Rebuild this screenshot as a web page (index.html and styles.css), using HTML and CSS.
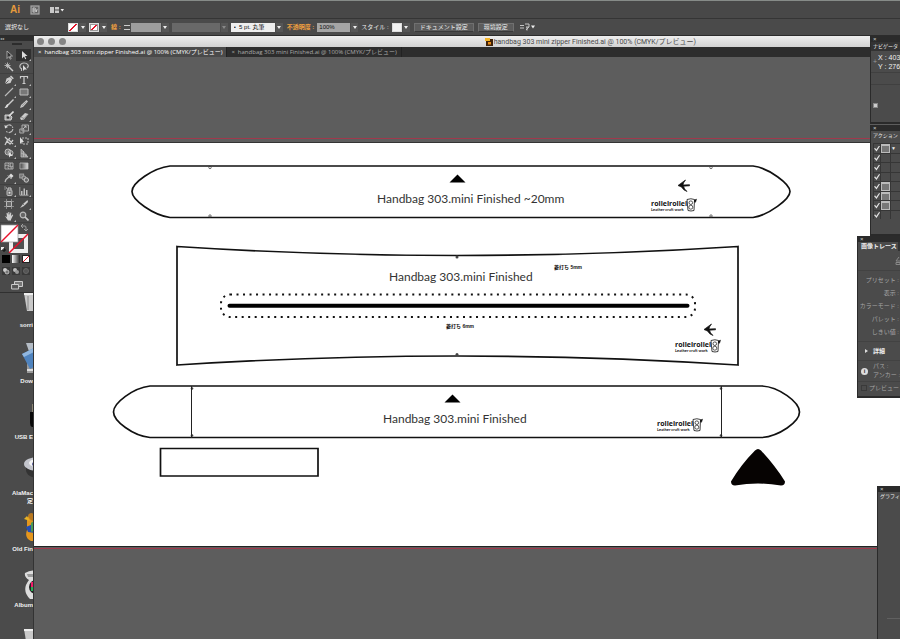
FILE: index.html
```html
<!DOCTYPE html>
<html lang="ja">
<head>
<meta charset="utf-8">
<title>handbag 303 mini zipper Finished.ai</title>
<link rel="stylesheet" href="styles.css">
</head>
<body>
<header class="menubar">
  <span class="brand">Ai</span>
  <button class="icon-btn" aria-label="Bridge"><svg width="10" height="10" viewBox="0 0 10 10"><rect x="1" y="1" width="8" height="8" fill="#666" stroke="#a8a8a8" stroke-width="1.2"/><path d="M3 3v4h1.500a1 1 0 0 0 0-2H3M3 3h1.500a1 1 0 0 1 0 2M6.500 7V4.800h1.200" fill="none" stroke="#ddd" stroke-width=".8"/></svg></button>
  <button class="icon-btn" aria-label="ドキュメントレイアウト"><svg width="14" height="10" viewBox="0 0 14 10"><path d="M0 2h4v6H0zM5 2h4v2.500H5zM5 5.500h4V8H5z" fill="#c9c9c9"/><path d="M10.500 4h3.500l-1.700 2.500z" fill="#eee"/></svg></button>
</header>

<section class="controls" aria-label="コントロール">
  <span class="selection">選択なし</span>
  <button class="swatch-btn" aria-label="塗り"><i class="swatch none"></i><i class="arrow"></i></button>
  <button class="swatch-btn" aria-label="線の色"><i class="swatch none ring"></i><i class="arrow"></i></button>
  <label class="hot" for="weight">線 :</label>
  <span class="field weight"><i class="spin"></i><select id="weight"><option></option></select><i class="arrow"></i></span>
  <span class="field profile"><select aria-label="可変線幅プロファイル" disabled><option></option></select><i class="arrow"></i></span>
  <span class="field brush"><select aria-label="ブラシ定義"><option>•&nbsp; 5 pt. 丸筆</option></select><i class="arrow"></i></span>
  <label class="hot" for="opacity">不透明度 :</label>
  <span class="field opacity"><input id="opacity" value="100%"><i class="arrow"></i></span>
  <span class="style-label">スタイル :</span>
  <button class="swatch-btn" aria-label="グラフィックスタイル"><i class="swatch"></i><i class="arrow"></i></button>
  <button class="push">ドキュメント設定</button>
  <button class="push">環境設定</button>
  <button class="icon-btn" aria-label="選択オプション"><svg width="16" height="8" viewBox="0 0 16 8"><path d="M0 2.500h4M0 5h4M5 1h4v3H6M7 4v3.500M9 4L6 7" fill="none" stroke="#c5c5c5"/><path d="M11 2.500h4L13 5.500z" fill="#eee"/></svg></button>
</section>

<main class="workspace">
  <aside class="side">
    <nav class="tools" aria-label="ツール">
      <div class="tools-head">◂◂</div>
      <div class="grip"></div>
      <div class="group">
        <button aria-label="選択"><svg viewBox="0 0 10 10"><path d="M3 1v7.500l2-2 1.200 2.700 1-.5L6 6h2.500z" fill="#333" stroke="#bbb" stroke-width=".8"/></svg></button>
        <button class="on more" aria-label="ダイレクト選択"><svg viewBox="0 0 10 10"><path d="M3 1v7.500l2-2 1.200 2.700 1-.5L6 6h2.500z" fill="#ddd"/></svg></button>
        <button aria-label="自動選択"><svg viewBox="0 0 10 10"><path d="M4.500 4.500L9 9" stroke="#ccc" stroke-width="1.500"/><path d="M3.500.5v6M.5 3.500h6M1.500 1.500l4 4M5.500 1.500l-4 4" stroke="#ccc" stroke-width=".8"/></svg></button>
        <button aria-label="なげなわ"><svg viewBox="0 0 10 10"><path d="M2.500 7C-.5 5 1 1 5 1s5.500 3 3 5" fill="none" stroke="#bbb" stroke-width="1.200"/><path d="M4 3v6l1.500-1.500H8z" fill="#ddd"/><path d="M2.500 6v3" stroke="#bbb"/></svg></button>
      </div>
      <div class="group">
        <button class="more" aria-label="ペン"><svg viewBox="0 0 10 10"><path d="M1 9l1.500-5.500L6 2l2.200 2.300L6.500 8z" fill="#ccc"/><path d="M1 9l3.500-3.500" stroke="#444" stroke-width=".8"/><path d="M6.500 1l2.800 2.800" stroke="#ccc" stroke-width="1.500"/></svg></button>
        <button class="more" aria-label="文字"><svg viewBox="0 0 10 10"><path d="M1.500 3.500V1.500h7v2M5 1.500v7M3.500 8.500h3" fill="none" stroke="#ccc" stroke-width="1.200"/></svg></button>
        <button class="more" aria-label="直線"><svg viewBox="0 0 10 10"><path d="M1 9l8-8" stroke="#bbb" stroke-width="1.100"/></svg></button>
        <button class="more" aria-label="長方形"><svg viewBox="0 0 10 10"><path d="M1 2h8v6H1z" fill="#777" stroke="#bbb"/></svg></button>
        <button aria-label="ブラシ"><svg viewBox="0 0 10 10"><path d="M9.500.5L4 6" stroke="#ccc" stroke-width="1.400"/><path d="M4.500 5.500C4 9 2 9 .5 9 2 8 1.500 6 3.500 5z" fill="#ddd"/></svg></button>
        <button class="more" aria-label="鉛筆"><svg viewBox="0 0 10 10"><path d="M1 9l1-3 5.500-5L9 2.500 4 8z" fill="#c5c5c5"/><path d="M3 7l4-4" stroke="#777" stroke-width=".5"/></svg></button>
        <button aria-label="塗りブラシ"><svg viewBox="0 0 10 10"><path d="M1 4h5l2 2-1 3H1z" fill="#999" stroke="#ddd" stroke-width=".9"/><path d="M9.500.5L4 6" stroke="#ddd" stroke-width="1.600"/><circle cx="4" cy="6.500" r="1.200" fill="#333"/></svg></button>
        <button class="more" aria-label="消しゴム"><svg viewBox="0 0 10 10"><path d="M1 7l5-5 3.500 1L5 8.500 2 9z" fill="#ccc"/><path d="M2 6l3 1.500 4-4" fill="none" stroke="#666" stroke-width=".6"/></svg></button>
      </div>
      <div class="group">
        <button class="more" aria-label="回転"><svg viewBox="0 0 10 10"><path d="M2 2.500A3.800 3.800 0 1 1 2 7" fill="none" stroke="#bbb" stroke-width="1.200" stroke-dasharray="6 1 1.500 1"/><path d="M.5 1l.5 3.500L4 3z" fill="#ddd"/></svg></button>
        <button class="more" aria-label="拡大・縮小"><svg viewBox="0 0 10 10"><path d="M3 1h6.500v6H3zM.8 5h4v4h-4z" fill="#555" stroke="#aaa"/><path d="M4 5l3-3M5 2h2v2" fill="none" stroke="#ccc" stroke-width=".8"/></svg></button>
        <button class="more" aria-label="線幅"><svg viewBox="0 0 10 10"><path d="M1 1l3 3 2-2M1 9l2-4 3 3 3-4M5 4l4 4" fill="none" stroke="#ccc" stroke-width="1.300"/></svg></button>
        <button aria-label="自由変形"><svg viewBox="0 0 10 10"><path d="M3 2h6v6H3z" fill="none" stroke="#bbb" stroke-dasharray="2 1"/><path d="M1 1v7l2-2h2z" fill="#ddd"/></svg></button>
        <button class="more" aria-label="シェイプ形成"><svg viewBox="0 0 10 10"><circle cx="4" cy="4" r="3" fill="#777" stroke="#bbb"/><circle cx="6.500" cy="5" r="2.500" fill="none" stroke="#bbb"/><path d="M5 4v5.500L6.500 8H9z" fill="#ddd"/></svg></button>
        <button class="more" aria-label="遠近グリッド"><svg viewBox="0 0 10 10"><path d="M2 1v8h7L2 1M4.500 3v6M7 6v3M2 5l6 3" fill="#888" stroke="#bbb" stroke-width=".8"/></svg></button>
      </div>
      <div class="group">
        <button aria-label="メッシュ"><svg viewBox="0 0 10 10"><path d="M1 2h8v6H1z" fill="#555" stroke="#aaa"/><path d="M1 5c3-3 5 3 8 0M4 2c3 2-2 4 1 6M7 2c-2 2 1 4 0 6" fill="none" stroke="#bbb" stroke-width=".8"/></svg></button>
        <button aria-label="グラデーション"><svg viewBox="0 0 10 10"><defs><linearGradient id="g"><stop stop-color="#444"/><stop offset="1" stop-color="#ddd"/></linearGradient></defs><path d="M1 2h8v6H1z" fill="url(#g)" stroke="#bbb" stroke-width=".8"/></svg></button>
        <button class="more" aria-label="スポイト"><svg viewBox="0 0 10 10"><path d="M1 9l1-2.500 3.500-3" fill="none" stroke="#bbb" stroke-width="1.300"/><path d="M5 2.500l2-2L9.500 3l-2 2z" fill="#ddd"/><path d="M4 2.500L7.500 6" stroke="#ddd"/></svg></button>
        <button aria-label="ブレンド"><svg viewBox="0 0 10 10"><rect x=".7" y="1" width="4" height="4" fill="#777" stroke="#aaa" stroke-width=".8"/><circle cx="5" cy="5" r="2" fill="#666" stroke="#aaa"/><circle cx="7.300" cy="7" r="2.200" fill="#666" stroke="#ccc"/></svg></button>
      </div>
      <div class="group">
        <button class="more" aria-label="シンボルスプレー"><svg viewBox="0 0 10 10"><rect x="3" y="4" width="5" height="5.500" rx="1" fill="#777" stroke="#bbb"/><path d="M4 4V2h3v2M.5 1h1M.5 3h1M2 2h1" fill="none" stroke="#ccc"/><circle cx="5.500" cy="6.700" r="1" fill="#ddd"/></svg></button>
        <button class="more" aria-label="棒グラフ"><svg viewBox="0 0 10 10"><path d="M.8 1v8.200H9.500" fill="none" stroke="#bbb" stroke-width=".8"/><path d="M2 5h1.500v4H2zM4.500 2.500H6V9H4.500zM7 4h1.500v5H7z" fill="#bbb"/></svg></button>
      </div>
      <div class="group">
        <button aria-label="アートボード"><svg viewBox="0 0 10 10"><path d="M2.500 2.500h5v5h-5z" fill="#666" stroke="#bbb"/><path d="M2.500 0v2M7.500 0v2M2.500 8v2M7.500 8v2M0 2.500h2M8 2.500h2M0 7.500h2M8 7.500h2" stroke="#999" stroke-width=".8"/></svg></button>
        <button class="more" aria-label="スライス"><svg viewBox="0 0 10 10"><path d="M1 9l3-4 4.500-4L9 3 5 7z" fill="#ccc"/><path d="M4 5l1.500 1.500" stroke="#444" stroke-width=".6"/></svg></button>
        <button class="more" aria-label="手のひら"><svg viewBox="0 0 10 10"><path d="M1 5l2 1-.5-4 1-.3L4.300 4V1h1l.3 3 .8-2.600.9.300L7 5l1.500-1.500.7.600L7 8.500V9.500H4z" fill="#ccc"/></svg></button>
        <button aria-label="ズーム"><svg viewBox="0 0 10 10"><circle cx="4" cy="4" r="2.800" fill="#666" stroke="#bbb" stroke-width="1.200"/><path d="M6 6l3.500 3.500" stroke="#ccc" stroke-width="1.700"/></svg></button>
      </div>
      <svg class="fillstroke" viewBox="0 0 32 30" role="img" aria-label="塗りと線">
        <path d="M11 13h15v15H11z" fill="none" stroke="#eee" stroke-width="4"/><path d="M13 15h11v11H13z" fill="#505050"/><path d="M9 30L28 11" stroke="#e8102a" stroke-width="1.500"/>
        <path d="M1 2h17v17H1z" fill="#fff" stroke="#999" stroke-width=".7"/><path d="M1 19L18 2" stroke="#e8102a" stroke-width="1.500"/>
        <path d="M22 3h3c1 0 1 1 1 4M23 1l-2 2 2 2M24 6l2 2 2-2" fill="none" stroke="#aaa" stroke-width=".9"/>
        <path d="M1 24h3v3H1z" fill="#eee"/><path d="M3 26h2v2H3z" stroke="#111" fill="none"/>
      </svg>
      <div class="modes">
        <button class="solid" aria-label="カラー"></button><button class="grad" aria-label="グラデーション"></button><button class="nofill" aria-label="なし"></button>
      </div>
      <div class="modes draw">
        <button aria-label="標準描画"><svg viewBox="0 0 8 8"><circle cx="3" cy="3" r="2" fill="#ccc"/><circle cx="5" cy="5" r="2" fill="#777" stroke="#ddd" stroke-width=".7"/></svg></button>
        <button aria-label="背面描画"><svg viewBox="0 0 8 8"><circle cx="3" cy="3" r="2" fill="#bbb"/><circle cx="5" cy="5" r="2" fill="#999"/></svg></button>
        <button aria-label="内側描画"><svg viewBox="0 0 8 8"><circle cx="4" cy="4" r="2.500" fill="#555" stroke="#666"/></svg></button>
      </div>
      <button class="screen" aria-label="スクリーンモード"><svg viewBox="0 0 12 10"><path d="M3.500 1.500h8v5h-8z" fill="#777" stroke="#ccc"/><path d="M.6 4.500h7v4.500h-7z" fill="#555" stroke="#ccc"/></svg></button>
    </nav>

    <ul class="desktop">
      <li><svg viewBox="0 4 40 28"><path d="M24 4h16v18H27z" fill="#c9c9c9"/><path d="M24 4h16v2H24z" fill="#eee"/><path d="M28 7v14" stroke="#888"/></svg><span>sorri</span></li>
      <li><svg viewBox="0 4 40 28"><path d="M27 16h13v12H27z" fill="#999"/><path d="M27 24h13v2H27z" fill="#ddd"/><path d="M26-2h14v14H31z" fill="#b4bcc5"/><path d="M22 9L38 1l2 18-10 5z" fill="#4f83be"/><path d="M22 9L38 1v4l-14 7z" fill="#91b7df"/></svg><span>Dow</span></li>
      <li><svg viewBox="0 4 40 28"><path d="M32 3h8v12h-8z" fill="#8a8472"/><path d="M30 11h10v15h-8q-2-1-2-4z" fill="#090909"/></svg><span>USB E</span></li>
      <li><svg viewBox="0 4 40 28"><ellipse cx="38" cy="13" rx="12" ry="8" fill="#333"/><ellipse cx="38" cy="7" rx="14" ry="7" fill="#c3c5cc"/><ellipse cx="35" cy="6" rx="6" ry="3.500" fill="#f4f4f4"/><ellipse cx="34" cy="7" rx="2" ry="2" fill="#5b5d9b"/></svg><span>AlaMac<br>定</span></li>
      <li><svg viewBox="0 4 40 28"><path d="M27 6q3-7 8-3l5 7v18H31q-7-3-4-11z" fill="#e5961c"/><path d="M27 3l-3 3 6 2z" fill="#e7b325"/><path d="M26 14l7-3 1 9-6-1z" fill="#234db3"/><path d="M31 10l5-4v11l-5 2z" fill="#4a9a55"/><path d="M28 2q3-4 7 0l-2 6q-4-1-5-6" fill="#b87820"/></svg><span>Old Fin</span></li>
      <li><svg viewBox="0 4 40 28"><path d="M25 4q8-5 15 0v26H30q-9-9-1-19-5-3-4-7z" fill="#ddd"/><path d="M27 5h13v3H28z" fill="#999"/><circle cx="36" cy="18" r="7" fill="#222"/><path d="M31 13h3v5h-3z" fill="#ee1d68"/><path d="M33 12h5v5h-5z" fill="#f1df23"/><path d="M31 18h5v4h-5z" fill="#29ab55"/></svg><span>Album</span></li>
      <li><svg viewBox="0 4 40 28"><path d="M24 4h16v18H27z" fill="#c9c9c9"/><path d="M24 4h16v2H24z" fill="#eee"/></svg></li>
    </ul>
  </aside>

  <section class="doc">
    <div class="titlebar">
      <div class="lights"><i></i><i></i><i></i></div>
      <h1><svg width="8" height="8" viewBox="0 0 8 8"><path d="M1 1h7v7H1z" fill="#402208"/><path d="M0 0h5v3H0z" fill="#f4b52a"/><path d="M3 4h3v2.500H3z" fill="#e88b16"/></svg>handbag 303 mini zipper Finished.ai @ 100% (CMYK/プレビュー)</h1>
    </div>
    <div class="tabs">
      <button class="tab active"><i>×</i>handbag 303 mini zipper Finished.ai @ 100% (CMYK/プレビュー)</button>
      <button class="tab"><i>×</i>handbag 303 mini Finished.ai @ 100% (CMYK/プレビュー)</button>
    </div>
    <div class="paste top"></div>
    <svg class="artboard" viewBox="34 143 866 403">
      <defs>
        <g id="face"><path d="M1 1.500q4-1.500 7.500 0l-.5 11q-3 1-6 0z" fill="none" stroke="#111" stroke-width=".8"/><circle cx="4.800" cy="4.700" r="1.800" fill="none" stroke="#111" stroke-width=".7"/><circle cx="4.800" cy="9.200" r="2" fill="none" stroke="#111" stroke-width=".7"/><path d="M8.500 4V2l2-.8-1 3z" fill="#111" stroke="#111" stroke-width=".6"/></g>
        <path id="bird" d="M0 5.500L7.500 0Q5 3 5 5l6.500-.3v1.100L5.500 6.200Q6 9 9 11.500 5 10 3.500 7z" fill="#111" stroke="#111" stroke-width=".7"/>
      </defs>
      <g fill="none" stroke="#111" stroke-width="1.700">
        <path d="M170 166H753C769 168 790 184 790 191.500S769 215 753 217.500H170C153 215 132 200 132 191.500S153 168 170 166z"/>
        <path d="M177 246.500Q317 255.500 457 255.500T738 246.500V365Q597 356 457 356T177 365z"/>
        <path d="M150 386H762C779 387 799.500 402 799.500 412S779 436 762 437.500H150C133 436 113.500 421 113.500 412S133 388 150 386z"/>
        <path d="M160.500 448.500h157.500v27.500H160.500z"/>
      </g>
      <g fill="none" stroke="#333" stroke-width=".7">
        <circle cx="210" cy="167.500" r="1.200"/><circle cx="210" cy="216" r="1.200"/><circle cx="711" cy="167.500" r="1.200"/><circle cx="711" cy="216" r="1.200"/>
      </g>
      <g fill="#444"><circle cx="457" cy="257" r="1.500"/><circle cx="457" cy="354.500" r="1.500"/><circle cx="192" cy="388.500" r="1.300"/><circle cx="192" cy="435.500" r="1.300"/><circle cx="721" cy="388.500" r="1.300"/><circle cx="721" cy="435.500" r="1.300"/></g>
      <path d="M191.500 386v52M721.500 386v52" stroke="#222"/>
      <rect x="221" y="294.500" width="474" height="22.500" rx="9" fill="none" stroke="#111" stroke-width="2" stroke-dasharray="2 4.510"/>
      <path d="M229.500 305.700H687.500" stroke="#000" stroke-width="4" stroke-linecap="round"/>
      <path d="M457.500 174.500l8 8h-16zM452.500 394.500l8 8h-16z" fill="#000"/>
      <path d="M755 450.500q3-3 6 0 14 15 24 31 0 4-4 4-23-4-46 0-4 0-4-4 10-17 24-31z" fill="#060302"/>
      <g class="piece-name">
        <text x="377" y="203">Handbag 303.mini Finished ~20mm</text>
        <text x="389" y="281">Handbag 303.mini Finished</text>
        <text x="383" y="423">Handbag 303.mini Finished</text>
      </g>
      <g class="note"><text x="554" y="269">菱打ち 5mm</text><text x="446" y="328">菱打ち 6mm</text></g>
      <use href="#bird" x="678" y="180"/><use href="#bird" x="704" y="324"/>
      <g><text class="logo" x="651" y="206">rolleirollei</text><text class="sub" x="651" y="211">Leather craft work</text><use href="#face" x="686" y="198"/></g>
      <g><text class="logo" x="675" y="347">rolleirollei</text><text class="sub" x="675" y="352">Leather craft work</text><use href="#face" x="710" y="339"/></g>
      <g><text class="logo" x="657" y="426">rolleirollei</text><text class="sub" x="657" y="431">Leather craft work</text><use href="#face" x="692" y="418"/></g>
    </svg>
    <div class="paste bottom"></div>
  </section>

  <section class="panel navigator">
    <div class="panel-head">×</div>
    <h2>ナビゲータ</h2>
    <div class="coords"><i>+</i><span>X : 403<br>Y : 276</span></div>
    <div class="rule"></div>
    <div class="rule empty"><i class="dot"></i></div>
  </section>

  <section class="panel actions">
    <div class="panel-head">×</div>
    <h2>アクション</h2>
    <ul>
      <li><input type="checkbox" checked aria-label="セット"><i class="dlg"></i><b>▼</b></li>
      <li><input type="checkbox" checked aria-label="アクション1"><i></i><b></b></li>
      <li><input type="checkbox" checked aria-label="アクション2"><i></i><b></b></li>
      <li><input type="checkbox" checked aria-label="アクション3"><i></i><b></b></li>
      <li><input type="checkbox" checked aria-label="アクション4"><i class="dlg"></i><b></b></li>
      <li><input type="checkbox" checked aria-label="アクション5"><i class="dlg"></i><b></b></li>
      <li><input type="checkbox" checked aria-label="アクション6"><i class="dlg"></i><b></b></li>
      <li><input type="checkbox" checked aria-label="アクション7"><i></i><b></b></li>
    </ul>
  </section>

  <section class="panel trace">
    <div class="panel-head">×</div>
    <h2><span>画像トレース</span></h2>
    <div class="preset"><svg width="5" height="8" viewBox="0 0 5 8"><path d="M4 0L1 4h4M1 5.500h4v2H1z" fill="none" stroke="#888"/></svg></div>
    <div class="rows"><span>プリセット :</span><span>表示 :</span><span>カラーモード :</span><span>パレット :</span><span>しきい値 :</span></div>
    <div class="detail"><i></i>詳細</div>
    <div class="info"><b>i</b><span>パス :<br>アンカー :</span></div>
    <label class="preview"><input type="checkbox">プレビュー</label>
  </section>

  <section class="panel styles">
    <div class="panel-head">×</div>
    <h2>グラフィ</h2>
    <div class="foot"></div>
  </section>
</main>
</body>
</html>
```
FILE: styles.css
```css
* { box-sizing: border-box; }
body {
  margin: 0;
  height: 100vh;
  display: flex;
  flex-direction: column;
  overflow: hidden;
  background: #4a4a4a;
  color: #eee;
  font: 6px/8px "Liberation Sans", "Noto Sans CJK JP", sans-serif;
}
button, input, select {
  margin: 0;
  padding: 0;
  border: 0;
  border-radius: 0;
  background: none;
  color: inherit;
  font: inherit;
  appearance: none;
}
svg { display: block; }
ul { margin: 0; padding: 0; list-style: none; }
h1, h2 { margin: 0; font: inherit; }
i, b { font-style: normal; display: block; flex: none; }

/* top bars */
.menubar {
  display: flex;
  align-items: center;
  gap: 10px;
  height: 18px;
  padding-left: 10px;
  border-top: 1px solid #868b88;
  background: #484848;
}
.brand { color: #e69a3c; font: bold 10px/12px "Liberation Sans", sans-serif; }
.controls {
  display: flex;
  align-items: center;
  gap: 3px;
  height: 18px;
  padding: 0 5px;
  border-top: 1px solid #353535;
  border-bottom: 1px solid #2c2c2c;
  background: #4a4a4a;
  white-space: nowrap;
}
.selection { width: 60px; }
.hot { padding-left: 1px; color: #f0a040; font-weight: bold; }
.arrow {
  display: flex;
  align-items: center;
  justify-content: center;
  width: 7px;
  height: 9px;
  background: #565656;
}
.arrow::before {
  content: "";
  border: 2px solid transparent;
  border-top: 3px solid #eee;
  border-bottom: 0;
}
.swatch-btn { display: flex; align-items: center; gap: 1px; }
.swatch { width: 10px; height: 9px; background: #f2f2f2; border: 1px solid #ddd; }
.none, .nofill { background: linear-gradient(135deg, #fff 42%, #e3162c 43%, #e3162c 57%, #fff 58%); }
.ring { box-shadow: inset 0 0 0 1px #999; }
.field { display: flex; align-items: center; gap: 1px; }
.field select, .field input { height: 9px; background: #9d9d9d; color: #111; line-height: 8px; }
.spin { width: 6px; height: 9px; background: linear-gradient(#4a4a4a 2px, #ccc 2px 3px, #4a4a4a 3px 6px, #ccc 6px 7px, #4a4a4a 7px); }
.weight select { width: 30px; }
.field.profile select { width: 48px; background: #757575; }
.profile .arrow::before { border-top-color: #888; }
.field.brush select { width: 44px; background: #eee; padding-left: 3px; }
.field.opacity input { width: 33px; background: #a5a5a5; padding-left: 2px; }
.push {
  height: 9px;
  margin-left: 1px;
  padding: 0 5px;
  border: 1px solid #707070;
  border-bottom-color: #393939;
  background: #5c5c5c;
  line-height: 7px;
}
.push + .icon-btn { margin-left: 3px; }

/* workspace */
.workspace { position: relative; display: flex; flex: 1; min-height: 0; }
.side { width: 34px; flex: none; overflow: hidden; border-right: 1px solid #333; background: #4b4b4b; }
.tools { padding-bottom: 2px; border-bottom: 1px solid #303030; background: #4a4a4a; }
.tools-head { height: 5px; background: #2d2d2d; color: #bbb; font-size: 4px; line-height: 5px; }
.grip { height: 8px; padding-top: 2px; }
.grip::before { content: ""; display: block; width: 10px; height: 2px; margin: 0 auto; background: #2c2c2c; }
.group {
  display: grid;
  grid-template-columns: 15px 15px;
  grid-auto-rows: 12px;
  padding-left: 1px;
  border-bottom: 1px solid #404040;
}
.group button { position: relative; display: grid; place-items: center; }
.group svg { width: 10px; height: 10px; }
.group .on { background: #303030; }
.more::after {
  content: "";
  position: absolute;
  right: 0;
  bottom: 0;
  border: 1px solid #bbb;
  border-top-color: transparent;
  border-left-color: transparent;
}
.fillstroke { width: 32px; height: 30px; }
.modes { display: flex; gap: 2px; padding: 2px; }
.modes button { width: 8px; height: 8px; }
.modes .solid { background: #000; }
.modes .grad { background: linear-gradient(90deg, #fff, #222); }
.modes .nofill { border: 1px solid #222; }
.draw button { background: #393939; }
.draw svg { width: 8px; height: 8px; }
.screen { display: block; margin: 3px auto 0; }
.screen svg { width: 12px; height: 10px; }

.desktop { text-align: right; font: bold 6px/8px "Liberation Sans", "Noto Sans CJK JP", sans-serif; color: #f2f2f2; }
.desktop li { height: 56px; }
.desktop svg { width: 40px; height: 28px; overflow: visible; }
.desktop span { display: block; white-space: nowrap; }

/* document window */
.doc { display: flex; flex-direction: column; flex: 1; min-width: 0; background: #5d5d5d; }
.titlebar {
  display: flex;
  align-items: center;
  height: 11px;
  flex: none;
  background: linear-gradient(#eee, #d2d2d2);
  color: #4a4a4a;
}
.lights { display: flex; gap: 4px; padding-left: 3px; }
.lights i { width: 7px; height: 7px; border-radius: 50%; background: #858585; }
.titlebar h1 {
  display: flex;
  align-items: center;
  gap: 1px;
  margin-left: 48%;
  padding-left: 3px;
  font: 7px/8px "Liberation Sans", "Noto Sans CJK JP", sans-serif;
  font-family: Roboto, "Noto Sans CJK JP", sans-serif;
  white-space: nowrap;
}
.tabs { display: flex; height: 10px; flex: none; background: #2d2d2d; }
.tab {
  display: flex;
  gap: 3px;
  align-items: center;
  padding: 0 4px;
  border-right: 1px solid #222;
  color: #aaa;
  font-family: "Open Sans", "Noto Sans CJK JP", sans-serif;
  white-space: nowrap;
}
.tab.active { background: #4a4a4a; color: #fff; }
.paste { background: #5d5d5d; }
.paste.top { height: 86px; flex: none; border-bottom: 1px solid #333; background: linear-gradient(#5d5d5d 81px, #a0394c 81px 82px, #5d5d5d 82px); }
.paste.bottom { flex: 1; border-top: 1px solid #222; background: linear-gradient(#5d5d5d 1px, #a0394c 1px 2px, #5d5d5d 2px); }
.artboard { width: 100%; flex: none; background: #fff; }
.piece-name { font: 12px "Lato", sans-serif; fill: #333; }
.note { font: bold 5px "Liberation Sans", "Noto Sans CJK JP", sans-serif; fill: #111; }
.logo { font: bold 7px "Open Sans", sans-serif; fill: #111; }
.sub { font: bold 4px "Lato", sans-serif; fill: #111; }

/* floating panels */
.panel {
  position: absolute;
  right: 0;
  overflow: hidden;
  border: solid #2a2a2a;
  border-width: 0 0 2px 1px;
  background: #4b4b4b;
  white-space: nowrap;
}
.panel-head { height: 6px; padding-left: 2px; background: #2b2b2b; color: #ccc; line-height: 6px; }
.panel h2 { padding-left: 2px; font-size: 5px; line-height: 9px; }
.navigator { top: 0; width: 30px; height: 88px; }
.navigator h2 { background: #333; }
.coords { display: flex; align-items: center; gap: 1px; height: 21px; padding-left: 2px; font-size: 7px; line-height: 9px; }
.coords i { color: #999; }
.rule { height: 12px; border-top: 1px solid #404040; }
.rule.empty { height: 38px; padding: 18px 2px; }
.dot { width: 5px; height: 5px; border: 1px solid #888; background: #ccc; }
.actions { top: 89px; width: 30px; height: 111px; }
.actions ul { margin: 3px 0 0 2px; }
.actions li { display: flex; height: 10px; line-height: 8px; }
.actions li:nth-child(even) { height: 9px; }
.actions li > * { width: 10px; border: solid #363636; border-width: 1px 0 0 1px; font-size: 5px; }
.actions input { display: grid; place-items: center; }
.actions input:checked::before {
  content: "";
  width: 6px;
  height: 6px;
  background: #e5e5e5;
  clip-path: polygon(0 50%, 20% 40%, 38% 65%, 85% 0, 100% 10%, 42% 100%);
}
.dlg { display: grid; place-items: center; }
.dlg::before { content: ""; width: 7px; height: 6px; border: 1px solid #bbb; border-top-width: 2px; background: #777; }
.trace { top: 200px; width: 43px; height: 162px; color: #a5a5a5; }
.trace h2 { background: #333; padding: 0; color: #eee; font-size: 6px; }
.trace h2 span { display: inline-block; padding: 0 1px 0 3px; background: #4b4b4b; font-weight: bold; }
.preset { display: flex; justify-content: flex-end; height: 20px; padding-top: 6px; border-bottom: 1px solid #424242; }
.rows { display: grid; grid-auto-rows: 13px; align-items: center; justify-items: end; padding: 2px 1px 3px 0; border-bottom: 1px solid #424242; }
.detail { display: flex; align-items: center; gap: 5px; height: 19px; padding-left: 7px; color: #eee; font-weight: bold; border-bottom: 1px solid #424242; }
.detail i { border: 2px solid transparent; border-left: 3px solid #ddd; border-right: 0; }
.info { display: flex; align-items: center; gap: 5px; height: 20px; padding-left: 3px; }
.info b { width: 7px; height: 7px; border-radius: 50%; background: #ddd; color: #333; text-align: center; line-height: 7px; }
.info span { line-height: 9px; }
.preview { display: flex; align-items: center; gap: 2px; height: 12px; padding-left: 3px; border-top: 1px solid #424242; }
.preview input { width: 6px; height: 6px; border: 1px solid #3a3a3a; }
.styles { top: 450px; bottom: 0; width: 23px; border-bottom: 0; }
.foot { margin: 117px 0 0 9px; border-top: 1px solid #606060; }
```
